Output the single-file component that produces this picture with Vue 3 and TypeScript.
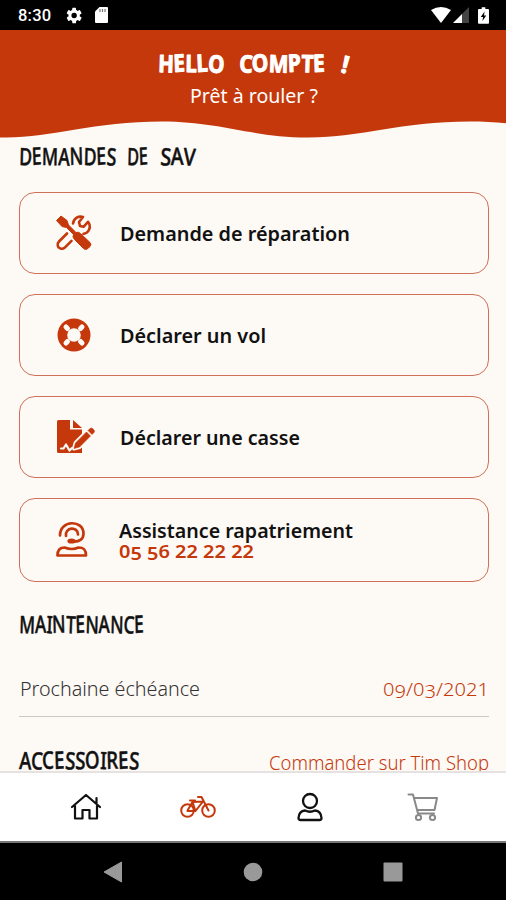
<script setup lang="ts">
interface ServiceCard {
  id: 'repair' | 'theft' | 'breakage' | 'assistance'
  label: string
  width: number
  phone?: string
}

const services: ServiceCard[] = [
  { id: 'repair', label: 'Demande de réparation', width: 230 },
  { id: 'theft', label: 'Déclarer un vol', width: 146 },
  { id: 'breakage', label: 'Déclarer une casse', width: 180 },
  { id: 'assistance', label: 'Assistance rapatriement', width: 234, phone: '05 56 22 22 22' },
]
</script>

<template>
  <div class="screen">
    <div class="status">
      <span class="clock">8:30</span>
      <svg class="gear" width="17" height="17" viewBox="0 0 24 24"><path fill="#fff" d="M19.4 13c.1-.3.1-.7.1-1s0-.7-.1-1l2.400-1.900a.6.6 0 0 0 .1-.7l-2.200-3.800a.6.6 0 0 0-.7-.2l-2.800 1.100c-.6-.4-1.200-.8-1.900-1.100l-.4-2.900A.6.6 0 0 0 13.400 1H9.600a.6.6 0 0 0-.6.500l-.4 2.900c-.7.3-1.300.7-1.900 1.100L3.900 4.400a.6.6 0 0 0-.7.2L1.100 8.400c-.1.200-.1.500.1.700L3.600 11a8 8 0 0 0 0 2l-2.400 1.900a.6.6 0 0 0-.1.700l2.100 3.800c.1.200.4.300.7.200l2.800-1.100c.6.400 1.200.8 1.900 1.100l.4 2.900c0 .3.300.5.6.5h3.800c.3 0 .6-.2.6-.5l.4-2.900c.7-.3 1.300-.7 1.900-1.100l2.800 1.100c.3.100.6 0 .7-.2l2.200-3.800a.6.6 0 0 0-.1-.7zM11.500 15.800a3.800 3.800 0 1 1 0-7.600 3.800 3.800 0 0 1 0 7.600z" /></svg>
      <svg class="sd" width="13" height="16" viewBox="0 0 13 16"><path fill="#fff" d="M4.500 0H12q1 0 1 1v14q0 1-1 1H1q-1 0-1-1V4.500z" /><path d="M5 2v3M7.500 2v3M10 2v3" stroke="#777" stroke-width="1.200" /></svg>
      <span class="spacer"></span>
      <svg width="20" height="16" viewBox="0 0 20 16"><path fill="#fff" d="M0 3Q10-3 20 3L10 16z" /></svg>
      <svg class="signal" width="16" height="16" viewBox="0 0 16 16"><path fill="#444" d="M16 0v16H9V7z" /><path fill="#fff" d="M9 7v9H0z" /></svg>
      <svg class="battery" width="11" height="17" viewBox="0 0 12 18"><path fill="#fff" d="M4 0h4v2h3q1 0 1 1v14q0 1-1 1H1q-1 0-1-1V3q0-1 1-1h3z" /><path d="M7.200 4.500 3 10.500h2.500L4.800 15 9 9H6.500z" /></svg>
    </div>

    <header class="hero">
      <svg class="brush bold" width="194" height="28" viewBox="0 0 194 28">
        <text x="2" y="21" textLength="66" lengthAdjust="spacingAndGlyphs" rotate="2 -3 1 -3 4">HELLO</text>
        <text x="83" y="21" textLength="86" lengthAdjust="spacingAndGlyphs" rotate="3 -2 2 -3 2 -2">COMPTE</text>
        <text x="184" y="21" rotate="14">!</text>
      </svg>
      <p class="sub"><svg width="130" height="28"><text x="1" y="20" textLength="128" lengthAdjust="spacingAndGlyphs">Prêt à rouler ?</text></svg></p>
    </header>
    <svg class="wave" width="506" height="18" viewBox="0 0 506 18"><path fill="#c5380b" d="M0 0H506V2.300C494 1 483 .5 470 .5C400 .5 362 16.500 308 16.500C252 16.500 220 .5 162 .5C94 .5 52 16.500 6 16.500H0z" /></svg>

    <main class="content">
      <h2 class="title">
        <svg width="190" height="28" class="brush">
          <text x="0" y="23" textLength="97" lengthAdjust="spacingAndGlyphs" rotate="2 -3 1 3 -2 2 -3 4">DEMANDES</text>
          <text x="108" y="23" textLength="21" lengthAdjust="spacingAndGlyphs" rotate="2 -3">DE</text>
          <text x="141" y="23" textLength="35" lengthAdjust="spacingAndGlyphs" rotate="4 -1 4">SAV</text>
        </svg>
      </h2>

      <section class="cards">
        <button v-for="item in services" :key="item.id" class="card" :class="item.id">
          <span class="glyph">
            <svg v-if="item.id === 'repair'" width="36" height="36" viewBox="0 0 36 36">
              <path d="M17 8.500C18 3 22.500.8 27 2l-4 5 1 4 3.500.8 4.500-5c4 5 .5 11.500-4.500 12" fill="none" stroke="currentColor" stroke-width="2.600" stroke-linejoin="round" stroke-linecap="round" />
              <path d="M11 18.500 3 26.500c-2.500 2.500-1.500 6.500 2 7.200 2 .3 3-.4 4-1.400l6.500-6.500" fill="none" stroke="currentColor" stroke-width="2.600" stroke-linecap="round" />
              <path d="m5 1 6 4.500 1.500 4.500 7.500 7.500q2.500-1 4.500 1l9.500 9q2 2-.5 4.500l-1.500 1.500q-2.500 2-4.500 0l-9-9q-2.500-2.500-1-5L10.500 12.500 6 11.500.500 5.500z" fill="currentColor" stroke="currentColor" stroke-linejoin="round" />
            </svg>
            <svg v-else-if="item.id === 'theft'" width="36" height="36" viewBox="0 0 36 36">
              <circle cx="18" cy="18" r="16.500" fill="currentColor" />
              <path d="m10 10 1.500 1.500M26 10l-1.500 1.500M10 26l1.500-1.500M26 26l-1.500-1.500" stroke="#fdf9f5" stroke-width="5" stroke-linecap="round" />
              <circle cx="18" cy="18" r="6.800" fill="#fdf9f5" />
            </svg>
            <svg v-else-if="item.id === 'breakage'" width="40" height="36" viewBox="0 0 40 36">
              <path d="M2.500 1H14v9.500h12V34H2.500Q1 34 1 32.500v-30Q1 1 2.500 1zM17 1l9 8h-9z" fill="currentColor" />
              <path d="m5 29.500h2.500l2.500-4 3.500 6 2.500-2.500h2" fill="none" stroke="#fdf9f5" stroke-width="2.200" stroke-linecap="round" stroke-linejoin="round" />
              <path d="m19.500 24 11-11 4 4-11 11-5.500 1.500zM32 11.500l2-2q1.300-1 2.500 0l1.500 1.500q1 1.300 0 2.500l-2 2z" fill="currentColor" stroke="#fdf9f5" stroke-width="4" stroke-linejoin="round" />
              <path d="m19.500 24 11-11 4 4-11 11-5.500 1.500zM32 11.500l2-2q1.300-1 2.500 0l1.500 1.500q1 1.300 0 2.500l-2 2z" fill="currentColor" stroke="currentColor" stroke-width=".6" />
            </svg>
            <svg v-else width="34" height="36" viewBox="0 0 34 36" fill="none" stroke="currentColor" stroke-width="2.700" stroke-linecap="round" stroke-linejoin="round">
              <path d="M4 13.500C4-2.500 27.500-2.500 27.500 11.500c0 6-4.500 8.500-10.500 8M10 14c-1.500-9 12-10 12-1.500" />
              <ellipse cx="15.500" cy="19" rx="2.800" ry="1.200" fill="currentColor" />
              <path d="M8.500 25.500q7.500 3 14 0c5.500 0 7.500 2.500 7.500 8H1.500c0-5.500 2.500-8 7-8z" />
            </svg>
          </span>
          <span class="copy">
            <svg class="label" :width="item.width" height="28"><text x="0" y="22" :textLength="item.width" lengthAdjust="spacingAndGlyphs">{{ item.label }}</text></svg>
            <svg v-if="item.phone" class="phone" width="136" height="22"><text x="0" y="15" textLength="135" lengthAdjust="spacingAndGlyphs" dy="0 1.5 -1.5 1.5 -1.5">{{ item.phone }}</text></svg>
          </span>
        </button>
      </section>

      <h2 class="title maintenance">
        <svg width="130" height="28" class="brush"><text x="0" y="23" textLength="125" lengthAdjust="spacingAndGlyphs" rotate="2 -1 3 -2 3 -2 2 -1 2 3 -2">MAINTENANCE</text></svg>
      </h2>
      <div class="due">
        <svg width="184" height="28"><text x="1" y="20" textLength="180" lengthAdjust="spacingAndGlyphs">Prochaine échéance</text></svg>
        <svg class="accent date" width="108" height="28"><text x="2" y="20" textLength="106" lengthAdjust="spacingAndGlyphs" dy="0 1.5 -1.5 0 1.5 -1.5">09/03/2021</text></svg>
      </div>
      <div class="shop">
        <svg width="125" height="28" class="brush"><text x="0" y="23" textLength="120" lengthAdjust="spacingAndGlyphs" rotate="2 3 -2 -2 4 2 -3 2 -2 -2 4">ACCESSOIRES</text></svg>
        <svg class="accent" width="222" height="28"><text x="2" y="24" textLength="220" lengthAdjust="spacingAndGlyphs">Commander sur Tim Shop</text></svg>
      </div>
    </main>

    <nav class="tabs">
      <svg width="32" height="28" viewBox="0 0 32 28" fill="none" stroke="#111" stroke-width="2.200" stroke-linejoin="round" stroke-linecap="round"><path d="M2 14 16 2l14 12M5 13v12.500h7.500V17h7v8.500H27V13M26.500 5v6" /></svg>
      <svg class="bike" width="36" height="24" viewBox="0 0 36 24" fill="none" stroke="#c5380b" stroke-width="2" stroke-linejoin="round" stroke-linecap="round"><circle cx="7.500" cy="15.500" r="6.300" /><circle cx="28.500" cy="15.500" r="6.300" /><path d="m7.500 15.500 5-8.500L23 6.500l-7.500 9.500h-8M12.500 7l3 9M10 5.500h5M18 2h3.500l7 13.500" /></svg>
      <svg class="user" width="26" height="30" viewBox="0 0 26 30" fill="none" stroke="#111" stroke-width="2.300" stroke-linejoin="round"><circle cx="13" cy="9" r="7" /><path d="M8 18.500q5 2.500 10 0 6 .5 6.500 7.500 0 2-2 2h-19q-2 0-2-2 .5-7 6.500-7.500z" /></svg>
      <svg class="cart" width="32" height="30" viewBox="0 0 32 30" fill="none" stroke="#898989" stroke-width="2" stroke-linejoin="round" stroke-linecap="round"><path d="M1.500 2.500H6l5 19h16M7.500 6H30l-2.500 12H10" /><circle cx="11.500" cy="25.500" r="2.600" /><circle cx="25.500" cy="25.500" r="2.600" /></svg>
    </nav>
    <div class="system">
      <svg width="20" height="22" viewBox="0 0 20 22"><path d="M1 11 18.500 1v20z" fill="#999" stroke="#999" stroke-linejoin="round" /></svg>
      <svg class="home" width="20" height="20"><circle cx="10" cy="10" r="9.300" fill="#999" /></svg>
      <svg width="20" height="20"><rect x=".5" y=".5" width="19" height="19" rx="1" fill="#999" /></svg>
    </div>
  </div>
</template>

<style>
body { margin: 0; background: #fdf9f5; }
</style>

<style scoped>
.screen { width: 506px; height: 900px; overflow: hidden; display: flex; flex-direction: column; background: #fdf9f5; font-family: "Noto Sans", sans-serif; font-size: 20px; }
svg { display: block; flex: none; overflow: visible; }
text { fill: currentColor; }
.status { box-sizing: border-box; flex: none; height: 30px; background: #000; color: #fff; display: flex; align-items: center; padding: 0 17px 0 18px; }
.clock { font: 500 16.500px Roboto, sans-serif; width: 35px; letter-spacing: .2px; padding-top: 1px; }
.gear { margin-left: 13px; }
.sd { margin-left: 12px; }
.spacer { flex: 1; }
.signal { margin-left: 2px; }
.battery { margin-left: 9px; }
.hero { flex: none; height: 91px; background: #c5380b; color: #fff; display: flex; flex-direction: column; align-items: center; padding-top: 21px; box-sizing: border-box; }
.brush { font-family: "Noto Sans", sans-serif; font-weight: 500; font-size: 24px; }
.brush text { stroke: currentColor; stroke-width: .5px; stroke-linejoin: round; }
.bold { font-weight: 700; }
.bold text { stroke-width: 1px; }
.sub { margin: 4px 0 0; padding-left: 2px; font-size: 20px; }
.wave { margin-bottom: 3px; }
.content { flex: 1; min-height: 0; overflow: hidden; padding: 0 17px 0 19px; }
.title { margin: 0; color: #111; height: 28px; }
.cards { display: flex; flex-direction: column; gap: 20px; margin-top: 22px; }
.card { box-sizing: border-box; width: 470px; height: 82px; border: 1.500px solid #cf7058; border-radius: 16px; background: transparent; padding: 0 0 0 36px; display: flex; align-items: center; color: #c5380b; font-family: inherit; font-size: 20px; text-align: left; }
.card.assistance { height: 84px; }
.glyph { width: 64px; }
.assistance .glyph { width: 63px; }
.label { color: #111; font-weight: 600; }
.phone { font-weight: 600; font-size: 18.500px; margin-top: -1px; }
.copy { display: block; }
.maintenance { margin-top: 28px; }
.due { height: 54px; margin-top: 25px; width: 470px; display: flex; justify-content: space-between; align-items: center; border-bottom: 1.500px solid #ccc8c5; color: #333; box-sizing: border-box; font-weight: 300; }
.accent { color: #c5380b; font-weight: 300; }
.date { font-size: 18.500px; }
.shop { display: flex; justify-content: space-between; width: 470px; margin-top: 29px; color: #111; }
.tabs { flex: none; box-sizing: border-box; height: 72px; background: #fff; border-top: 2px solid #e5e2e1; border-bottom: 2px solid #777; display: flex; align-items: center; padding: 0 68px 0 70px; }
.bike { margin-left: 78px; }
.user { margin-left: 81px; }
.cart { margin-left: 84px; }
.system { flex: none; height: 57px; background: #000; display: flex; justify-content: space-between; align-items: center; padding: 0 103px; }
</style>
